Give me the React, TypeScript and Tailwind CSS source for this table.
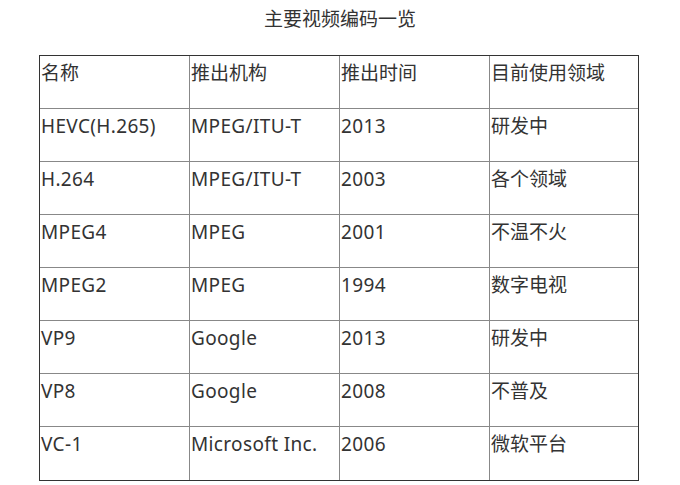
const rows: string[][] = [
  ["名称", "推出机构", "推出时间", "目前使用领域"],
  ["HEVC(H.265)", "MPEG/ITU-T", "2013", "研发中"],
  ["H.264", "MPEG/ITU-T", "2003", "各个领域"],
  ["MPEG4", "MPEG", "2001", "不温不火"],
  ["MPEG2", "MPEG", "1994", "数字电视"],
  ["VP9", "Google", "2013", "研发中"],
  ["VP8", "Google", "2008", "不普及"],
  ["VC-1", "Microsoft Inc.", "2006", "微软平台"],
];

const isLatin = (s: string) => /^[\x00-\x7f]+$/.test(s);

export default function App() {
  return (
    <div
      className="w-[680px] h-[485px] bg-white text-[#333] overflow-hidden"
      style={{ fontFamily: '"Noto Sans", "Noto Sans CJK SC", sans-serif' }}
    >
      <div className="pt-[6px] h-[55px] text-center text-[19px] leading-[26px]">主要视频编码一览</div>
      <div className="ml-[39px] w-[600px] border border-[#333]">
        {rows.map((row, i) => (
          <div
            key={i}
            className={`grid grid-cols-[150px_150px_150px_148px] h-[53px] ${i < rows.length - 1 ? "border-b border-[#888]" : "h-[52px]"}`}
          >
            {row.map((cell, j) => (
              <div
                key={j}
                className={`pl-[1px] pt-[4px] text-[19px] leading-[26px] whitespace-nowrap ${isLatin(cell) ? "tracking-[0.35px]" : ""} ${j < 3 ? "border-r border-[#888]" : ""}`}
              >
                {cell}
              </div>
            ))}
          </div>
        ))}
      </div>
    </div>
  );
}
